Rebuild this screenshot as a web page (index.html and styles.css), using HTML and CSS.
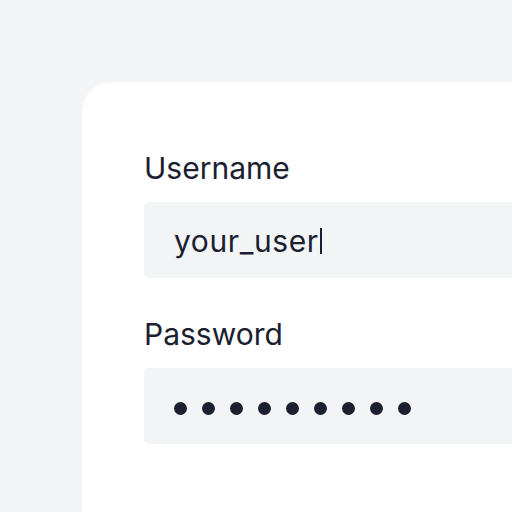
FILE: index.html
```html
<!DOCTYPE html>
<html lang="en">
<head>
<meta charset="utf-8">
<title>Login</title>
<link rel="stylesheet" href="styles.css">
</head>
<body>
<div class="card">
  <div class="field">
    <label class="label">Username</label>
    <div class="input"><span class="value">your_user</span><span class="caret"></span></div>
  </div>
  <div class="field">
    <label class="label">Password</label>
    <div class="input dots" aria-label="password">
      <span class="dot"></span><span class="dot"></span><span class="dot"></span>
      <span class="dot"></span><span class="dot"></span><span class="dot"></span>
      <span class="dot"></span><span class="dot"></span><span class="dot"></span>
    </div>
  </div>
</div>
</body>
</html>
```
FILE: styles.css
```css
html, body {
  margin: 0;
  padding: 0;
}
body {
  background: #f3f4f6;
  font-family: Inter, "Noto Sans", sans-serif;
  color: #1a2030;
  width: 512px;
  height: 512px;
  overflow: hidden;
}
.card {
  margin: 82px 0 0 82px;
  width: 430px;
  height: 430px;
  background: #ffffff;
  border-radius: 30px 0 0 0;
  padding: 68px 0 0 62px;
  box-sizing: border-box;
  display: flex;
  flex-direction: column;
  gap: 38px;
}
.field {
  display: flex;
  flex-direction: column;
  gap: 16px;
}
.label {
  font-size: 30px;
  line-height: 36px;
  font-weight: 400;
}
.input {
  height: 76px;
  background: #f3f4f6;
  border-radius: 5px 0 0 5px;
  padding: 2px 30px 0;
  box-sizing: border-box;
  display: flex;
  align-items: center;
  font-size: 30px;
  line-height: 36px;
  letter-spacing: 0.6px;
}
.caret {
  display: inline-block;
  width: 2px;
  height: 26px;
  background: #1a2030;
  margin-left: 1px;
}
.dots {
  gap: 15px;
  padding-top: 4px;
}
.dot {
  width: 13px;
  height: 13px;
  border-radius: 50%;
  background: #1a2030;
}
```
